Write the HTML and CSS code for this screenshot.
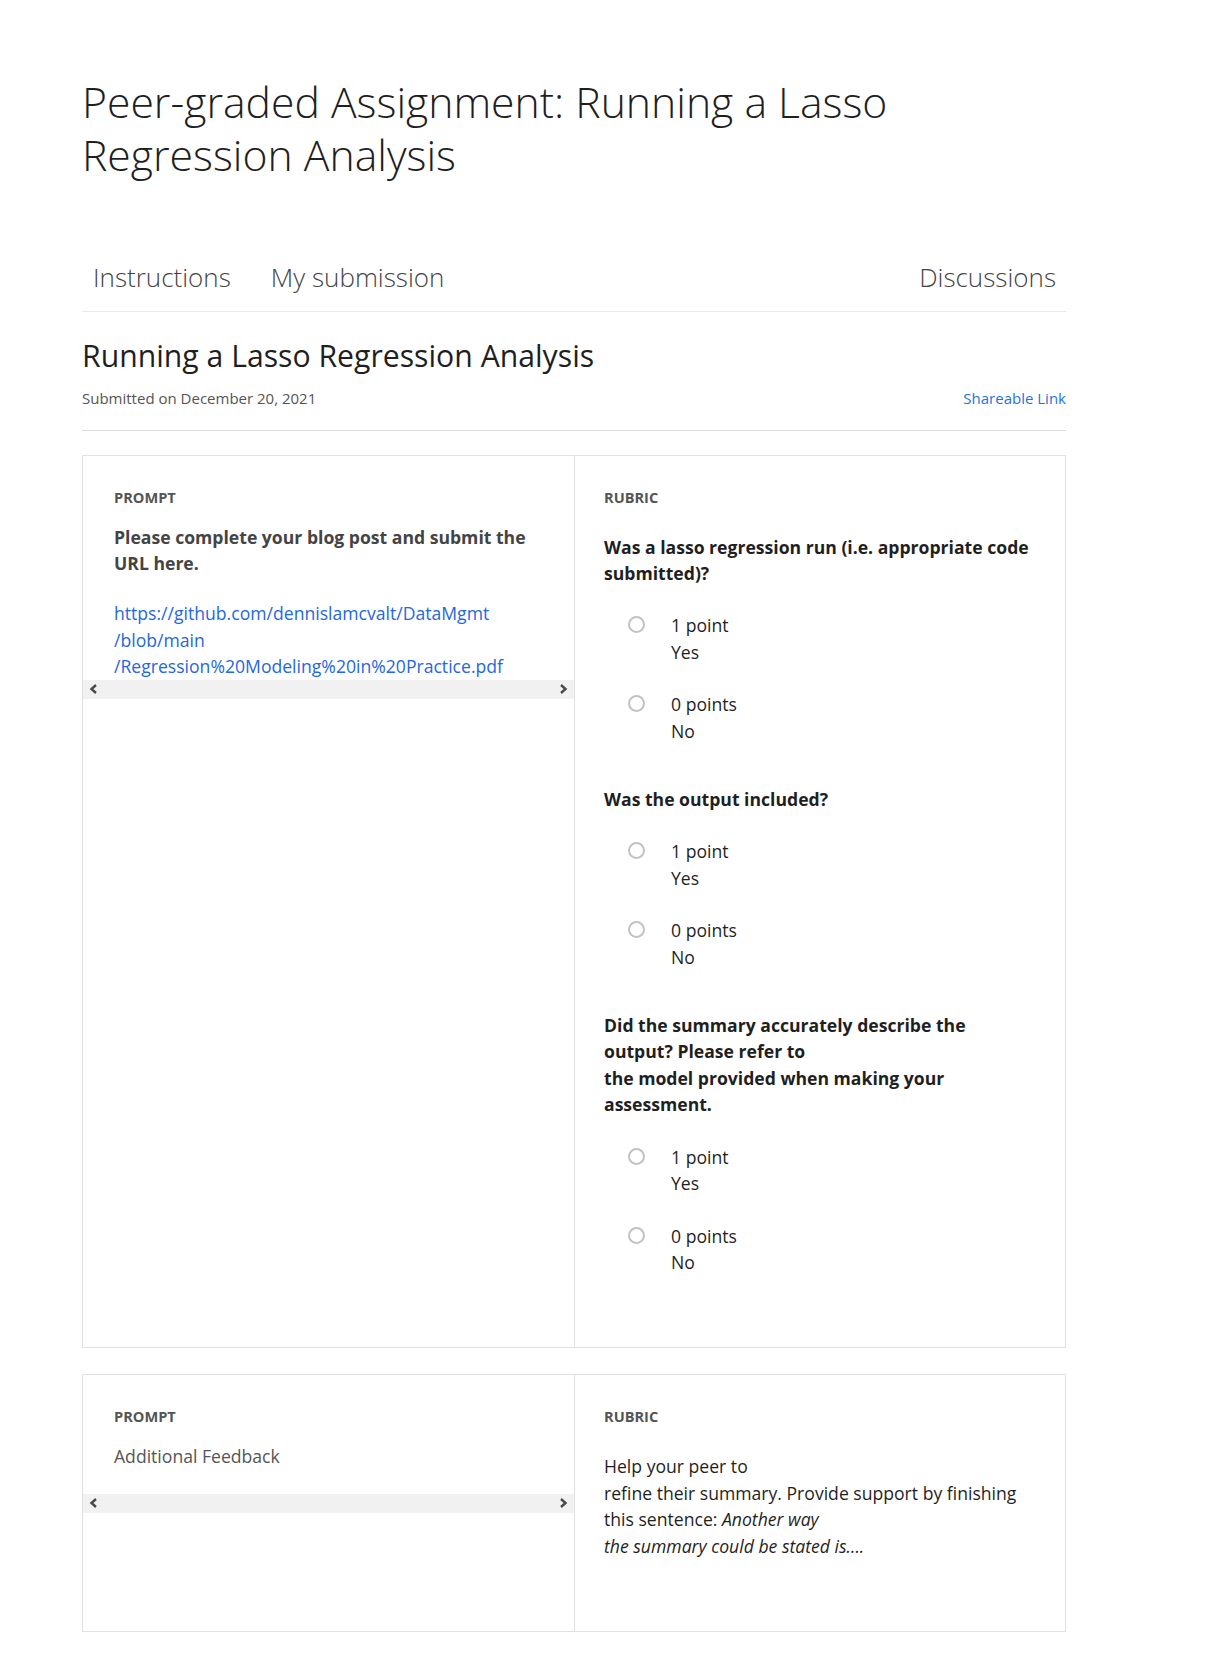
FILE: index.html
```html
<!DOCTYPE html>
<html lang="en">
<head>
<meta charset="utf-8">
<title>Peer-graded Assignment: Running a Lasso Regression Analysis</title>
<link rel="stylesheet" href="styles.css">
</head>
<body>
<div class="page">
  <h1 class="title">Peer-graded Assignment: Running a Lasso Regression Analysis</h1>

  <nav class="tabs">
    <a class="tab">Instructions</a>
    <a class="tab">My submission</a>
    <a class="tab tab-right">Discussions</a>
  </nav>

  <header class="sub-head">
    <h2 class="sub-title">Running a Lasso Regression Analysis</h2>
    <div class="sub-meta">
      <span class="date">Submitted on December 20, 2021</span>
      <a class="share">Shareable Link</a>
    </div>
  </header>

  <section class="card">
    <div class="col col-prompt">
      <div class="scroll">
        <div class="label">PROMPT</div>
        <p class="prompt-q">Please complete your blog post and submit the URL here.</p>
        <p class="prompt-link"><a>https://github.com/dennislamcvalt/DataMgmt<br>/blob/main<br>/Regression%20Modeling%20in%20Practice.pdf</a></p>
      </div>
      <div class="hscroll">
        <svg width="12" height="12" viewBox="0 0 12 12"><path d="M8 2 L3.5 6 L8 10" fill="none" stroke="#4a4a4a" stroke-width="2.4"/></svg>
        <svg width="12" height="12" viewBox="0 0 12 12"><path d="M4 2 L8.5 6 L4 10" fill="none" stroke="#4a4a4a" stroke-width="2.4"/></svg>
      </div>
    </div>
    <div class="col col-rubric">
      <div class="label">RUBRIC</div>

      <div class="criterion">
        <p class="crit-q">Was a lasso regression run (i.e. appropriate code submitted)?</p>
        <div class="option"><span class="radio"></span><div class="opt-text">1 point<br>Yes</div></div>
        <div class="option"><span class="radio"></span><div class="opt-text">0 points<br>No</div></div>
      </div>

      <div class="criterion">
        <p class="crit-q">Was the output included?</p>
        <div class="option"><span class="radio"></span><div class="opt-text">1 point<br>Yes</div></div>
        <div class="option"><span class="radio"></span><div class="opt-text">0 points<br>No</div></div>
      </div>

      <div class="criterion">
        <p class="crit-q">Did the summary accurately describe the output? Please refer to<br>the model provided when making your assessment.</p>
        <div class="option"><span class="radio"></span><div class="opt-text">1 point<br>Yes</div></div>
        <div class="option"><span class="radio"></span><div class="opt-text">0 points<br>No</div></div>
      </div>
    </div>
  </section>

  <section class="card card-2">
    <div class="col col-prompt">
      <div class="scroll">
        <div class="label">PROMPT</div>
        <p class="prompt-plain">Additional Feedback</p>
      </div>
      <div class="hscroll">
        <svg width="12" height="12" viewBox="0 0 12 12"><path d="M8 2 L3.5 6 L8 10" fill="none" stroke="#4a4a4a" stroke-width="2.4"/></svg>
        <svg width="12" height="12" viewBox="0 0 12 12"><path d="M4 2 L8.5 6 L4 10" fill="none" stroke="#4a4a4a" stroke-width="2.4"/></svg>
      </div>
    </div>
    <div class="col col-rubric">
      <div class="label">RUBRIC</div>
      <p class="rubric-text">Help your peer to<br>refine their summary. Provide support by finishing this sentence: <em>Another way<br>the summary could be stated is....</em></p>
    </div>
  </section>
</div>
</body>
</html>
```

FILE: styles.css
```css
* { box-sizing: border-box; }

html, body {
  margin: 0;
  padding: 0;
  background: #fff;
}

body {
  font-family: "Open Sans", "Noto Sans", "Liberation Sans", sans-serif;
  font-size: 17.6px;
  line-height: 26.4px;
  color: #1f1f1f;
}

.page {
  width: 984px;
  margin-left: 82px;
  padding-top: 76px;
  padding-bottom: 21px;
}

.title {
  margin: 0;
  width: 900px;
  font-size: 42.7px;
  line-height: 52.8px;
  font-weight: 300;
  color: #1f1f1f;
}

.tabs {
  display: flex;
  gap: 18px;
  margin-top: 78px;
  padding-bottom: 16px;
  border-bottom: 1px solid #e8e8e8;
}

.tab {
  padding: 0 11px;
  font-size: 26px;
  line-height: 35px;
  font-weight: 300;
  color: #444;
}

.tab-right { margin-left: auto; padding-right: 10px; }

.sub-head {
  padding-top: 24px;
  padding-bottom: 21px;
  border-bottom: 1px solid #dcdcdc;
}

.sub-title {
  margin: 0;
  font-size: 30.2px;
  line-height: 40px;
  font-weight: 400;
  color: #1f1f1f;
}

.sub-meta {
  display: flex;
  justify-content: space-between;
  align-items: center;
  margin-top: 11px;
  font-size: 15px;
  line-height: 22px;
}

.date { color: #555; }
.share { color: #1f73de; }

.card {
  display: grid;
  grid-template-columns: 1fr 1fr;
  margin-top: 24px;
  border: 1px solid #e1e1e1;
}

.card-2 { margin-top: 26px; }

.col { min-width: 0; }

.col-rubric {
  display: flex;
  flex-direction: column;
  border-left: 1px solid #e1e1e1;
  padding: 31px 31px 46px 29px;
}

.scroll {
  padding: 31px 31px 0 31px;
}

.label {
  font-size: 14.6px;
  line-height: 20px;
  font-weight: 700;
  color: #555;
}

.prompt-q {
  margin: 17px 0 0 0;
  font-weight: 700;
  color: #444;
}

.prompt-link {
  margin: 24px 0 0 0;
}

.prompt-link a { color: #2467e0; }

.prompt-plain {
  margin: 17px 0 24px 0;
  color: #555;
}

.hscroll {
  display: flex;
  justify-content: space-between;
  align-items: center;
  height: 19px;
  padding: 0 5px;
  background: #f1f1f1;
}

.criterion {
  display: flex;
  flex-direction: column;
  margin-top: 16px;
}

.label + .criterion { margin-top: 27px; }

.crit-q {
  margin: 0 0 26px 0;
  font-weight: 700;
  color: #1f1f1f;
}

.option {
  display: flex;
  align-items: flex-start;
  margin-bottom: 26px;
  padding-left: 24px;
  color: #1f1f1f;
}

.radio {
  flex: none;
  width: 17px;
  height: 17px;
  margin-top: 4px;
  border: 2px solid #c2c2c2;
  border-radius: 50%;
  background: #fff;
}

.opt-text { margin-left: 26px; }

.rubric-text {
  margin: 27px 0 26px 0;
  color: #1f1f1f;
}
```
